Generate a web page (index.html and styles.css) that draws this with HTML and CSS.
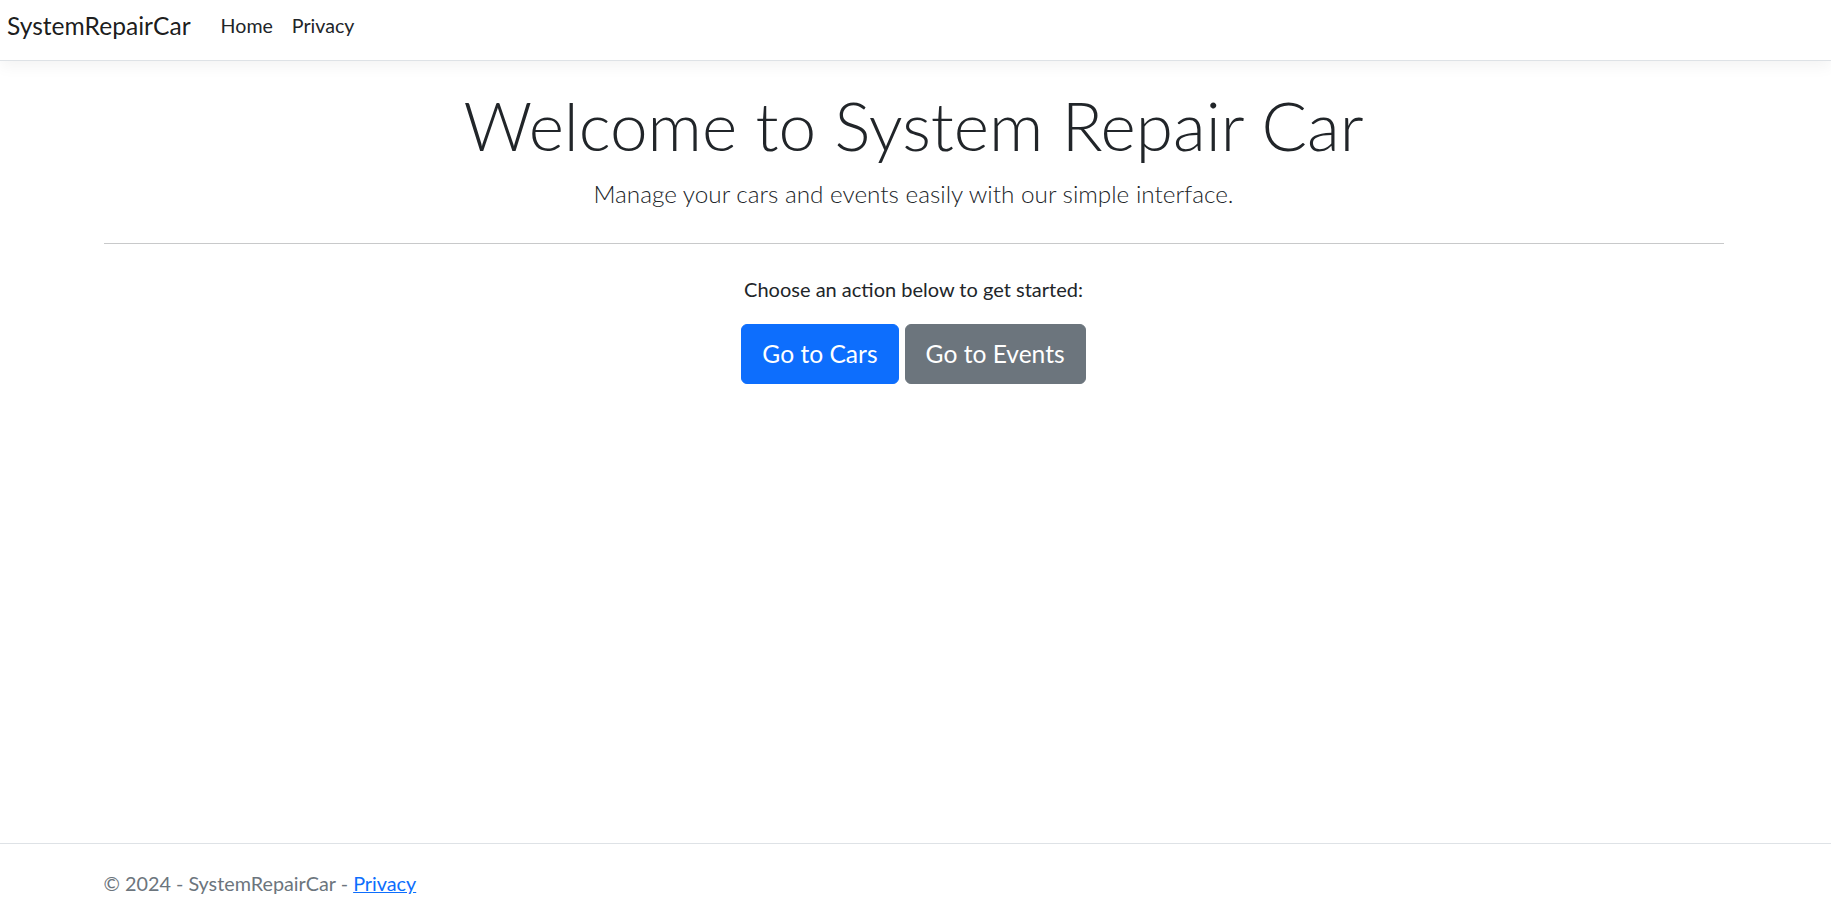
FILE: index.html
```html
<!DOCTYPE html>
<html lang="en">
<head>
<meta charset="utf-8">
<title>Home Page - SystemRepairCar</title>
<link rel="stylesheet" href="styles.css">
</head>
<body>
<header>
  <nav class="navbar">
    <div class="navbar-inner">
      <a class="brand" href="#">SystemRepairCar</a>
      <ul class="nav-list">
        <li><a class="nav-link" href="#">Home</a></li>
        <li><a class="nav-link" href="#">Privacy</a></li>
      </ul>
    </div>
  </nav>
</header>
<main class="container">
  <div class="hero">
    <h1 class="display">Welcome to System Repair Car</h1>
    <p class="lead">Manage your cars and events easily with our simple interface.</p>
    <hr class="divider">
    <p class="intro">Choose an action below to get started:</p>
    <div class="actions">
      <a class="btn btn-primary" href="#">Go to Cars</a>
      <a class="btn btn-secondary" href="#">Go to Events</a>
    </div>
  </div>
</main>
<footer class="footer">
  <div class="container">&copy; 2024 - SystemRepairCar - <a class="footer-link" href="#">Privacy</a></div>
</footer>
</body>
</html>
```
FILE: styles.css
```css
* { box-sizing: border-box; }

html, body { height: 100%; }

body {
  margin: 0;
  min-height: 100vh;
  display: flex;
  flex-direction: column;
  font-family: Lato, "Liberation Sans", sans-serif;
  font-size: 20px;
  line-height: 1.5;
  color: #212529;
  background: #fff;
}

a { text-decoration: none; }

.navbar {
  height: 61px;
  background: #fff;
  border-bottom: 1px solid #dee2e6;
  box-shadow: 0 5px 15px rgba(0, 0, 0, 0.05);
  margin-bottom: 20px;
  flex-shrink: 0;
}

.navbar-inner {
  height: 100%;
  display: flex;
  align-items: center;
  padding: 0 7px 8px;
}

.brand {
  font-size: 24.6px;
  line-height: 37.5px;
  color: rgba(0, 0, 0, 0.9);
  margin-right: 20px;
}

.nav-list {
  list-style: none;
  margin: 0;
  padding: 0;
  display: flex;
}

.nav-link {
  display: block;
  padding: 0 9px 0 10px;
  font-size: 19.6px;
  line-height: 30px;
  color: #212529;
}

.container {
  width: 100%;
  max-width: 1650px;
  margin: 0 auto;
  padding: 0 17px 0 13px;
}

main.container { padding-bottom: 20px; }

.hero { text-align: center; }

.display {
  margin: 2px 0 8px;
  font-size: 67.5px;
  font-weight: 300;
  line-height: 84px;
}

.lead {
  margin: 0;
  font-size: 24.3px;
  font-weight: 300;
  line-height: 38px;
}

.divider {
  margin: 30px 0;
  height: 0;
  border: 0;
  border-top: 1px solid #c8c9ca;
}

.intro {
  margin: 0 0 20px;
  line-height: 30px;
}

.actions {
  display: flex;
  justify-content: center;
  gap: 6px;
}

.btn {
  display: inline-block;
  padding: 10px 20px;
  font-size: 24.6px;
  line-height: 37.5px;
  border: 1px solid transparent;
  border-radius: 6px;
  color: #fff;
}

.btn-primary { background: #0d6efd; border-color: #0d6efd; }
.btn-secondary { background: #6c757d; border-color: #6c757d; }

.footer {
  margin-top: auto;
  flex-shrink: 0;
  border-top: 1px solid #dee2e6;
  padding-top: 6px;
  line-height: 66px;
  font-size: 19.8px;
  color: #6c757d;
  white-space: nowrap;
}

.footer-link {
  color: #0d6efd;
  text-decoration: underline;
}
```
